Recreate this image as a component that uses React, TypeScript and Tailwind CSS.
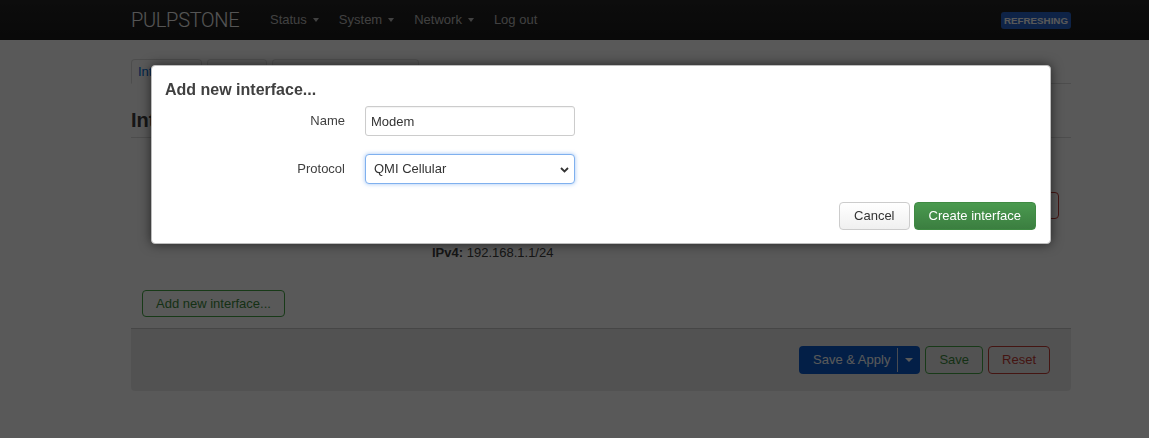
import React from "react";

function Caret() {
  return (
    <span className="ml-[6px] inline-block w-0 h-0 border-l-[3.5px] border-r-[3.5px] border-t-[4px] border-l-transparent border-r-transparent border-t-[#bbb] align-middle" />
  );
}

export default function App() {
  return (
    <div className="relative min-h-[438px] bg-white font-['Liberation_Sans',Arial,sans-serif] text-[13px] text-[#404040]">
      {/* Header */}
      <header className="h-[40px] bg-gradient-to-b from-[#262626] to-[#1a1a1a]">
        <div className="flex h-full w-[1071px] items-center pl-[131px]">
          <div className="w-[129px] font-['Roboto',sans-serif] text-[20px] font-light tracking-[-0.3px] text-[#f2f2f2]">
            PULPSTONE
          </div>
          <nav className="flex items-center text-[13px] text-[#bbb]">
            <span className="flex items-center px-[10px]">
              Status
              <Caret />
            </span>
            <span className="flex items-center px-[10px]">
              System
              <Caret />
            </span>
            <span className="flex items-center px-[10px]">
              Network
              <Caret />
            </span>
            <span className="px-[10px]">Log out</span>
          </nav>
          <span className="ml-auto rounded-[3px] bg-[#2a66cc] px-[3px] pt-[2px] pb-[1px] text-[9.75px] font-bold uppercase leading-[14px] text-white">
            Refreshing
          </span>
        </div>
      </header>

      {/* Main content */}
      <main className="w-[1071px] pl-[131px]">
        <ul className="mt-[19px] flex gap-[5px] border-b border-[#ddd]">
          <li className="-mb-px rounded-t-[4px] border border-[#ddd] border-b-white bg-white px-[6px] leading-[23px] text-[#0069d6]">
            Interfaces
          </li>
          <li className="-mb-px rounded-t-[4px] border border-[#e2e2e2] border-b-transparent bg-[#fafafa] px-[6px] leading-[23px] text-[#0069d6]">
            Devices
          </li>
          <li className="-mb-px rounded-t-[4px] border border-[#e2e2e2] border-b-transparent bg-[#fafafa] px-[6px] leading-[23px] text-[#0069d6]">
            Global network options
          </li>
        </ul>

        <h2 className="mt-[24px] border-b border-[#ddd] pb-[5px] text-[20px] font-bold leading-[24px] text-[#404040]">
          Interfaces
        </h2>

        {/* Interface row (mostly hidden under the dialog) */}
        <div className="mt-[11px] flex h-[112px] items-center pr-[12px]">
          <div className="w-[301px]" />
          <div className="flex h-full flex-1 flex-col justify-end text-[13px] leading-[16px]">
            <div>
              <b>IPv4:</b> 192.168.1.1/24
            </div>
          </div>
          <div className="flex gap-[5px]">
            <span className="h-[27px] w-[62px] rounded-[4px] border border-[#ccc]" />
            <span className="h-[27px] w-[48px] rounded-[4px] border border-[#ccc]" />
            <span className="h-[27px] w-[46px] rounded-[4px] border border-[#ccc]" />
            <span className="h-[27px] w-[62px] rounded-[4px] border border-[#c43c35]" />
          </div>
        </div>

        <div className="mt-[29px] pl-[11px]">
          <span className="inline-block h-[27px] rounded-[4px] border border-[#46a546] px-[13px] leading-[25px] text-[#3d8b3d]">
            Add new interface...
          </span>
        </div>

        <div className="mt-[11px] flex justify-end gap-[5px] rounded-b-[4px] border-t border-[#c8c8c8] bg-[#ececec] px-[21px] pt-[17px] pb-[17px]">
          <div className="flex h-[28px] overflow-hidden rounded-[4px] bg-[#0a5bcc] text-white">
            <span className="pl-[14px] pr-[7px] leading-[28px]">Save &amp; Apply</span>
            <span className="my-[2px] w-px bg-[#d0d8e8]" />
            <span className="flex w-[22px] items-center justify-center">
              <span className="inline-block h-0 w-0 border-l-[4px] border-r-[4px] border-t-[4px] border-l-transparent border-r-transparent border-t-white" />
            </span>
          </div>
          <span className="h-[28px] rounded-[4px] border border-[#46a546] px-[13px] leading-[26px] text-[#3d8b3d]">
            Save
          </span>
          <span className="h-[28px] rounded-[4px] border border-[#c43c35] px-[13px] leading-[26px] text-[#c43c35]">
            Reset
          </span>
        </div>
      </main>

      {/* Overlay */}
      <div className="fixed inset-0 bg-black/65" />

      {/* Modal */}
      <div className="absolute left-[151px] top-[65px] w-[900px] rounded-[4px] border border-[#bdbdbd] bg-white px-[13px] pt-[14px] pb-[13px] shadow-[0_0_12px_rgba(0,0,0,0.6)]">
        <h4 className="text-[16px] font-bold leading-[20px] text-[#404040]">Add new interface...</h4>
        <div className="mt-[6px] flex items-center">
          <label className="w-[180px] text-right">Name</label>
          <input
            readOnly
            value="Modem"
            className="ml-[20px] h-[30px] w-[210px] rounded-[3px] border border-[#ccc] px-[5px] text-[13px] text-[#333] shadow-[inset_0_1px_1px_rgba(0,0,0,0.05)] outline-none"
          />
        </div>
        <div className="mt-[18px] flex items-center">
          <label className="w-[180px] text-right">Protocol</label>
          <div className="relative ml-[20px] flex h-[30px] w-[210px] items-center rounded-[4px] border border-[#7fb0ee] bg-white pl-[8px] text-[#333] shadow-[0_0_4px_rgba(82,150,236,0.55)]">
            QMI Cellular
            <svg className="absolute right-[5px] top-[12px]" width="9" height="6" viewBox="0 0 9 6">
              <path d="M1 1l3.5 3.5L8 1" fill="none" stroke="#333" strokeWidth="1.8" />
            </svg>
          </div>
        </div>
        <div className="mt-[18px] flex justify-end gap-[4px] pr-[1px]">
          <span className="h-[28px] rounded-[4px] border border-[#ccc] bg-gradient-to-b from-white to-[#f0f0f0] px-[14px] leading-[26px] text-[#333]">
            Cancel
          </span>
          <span className="h-[28px] rounded-[4px] border border-[#3f8a43] bg-gradient-to-b from-[#4a9a4f] to-[#3b7e40] px-[14px] leading-[26px] text-white">
            Create interface
          </span>
        </div>
      </div>
    </div>
  );
}
